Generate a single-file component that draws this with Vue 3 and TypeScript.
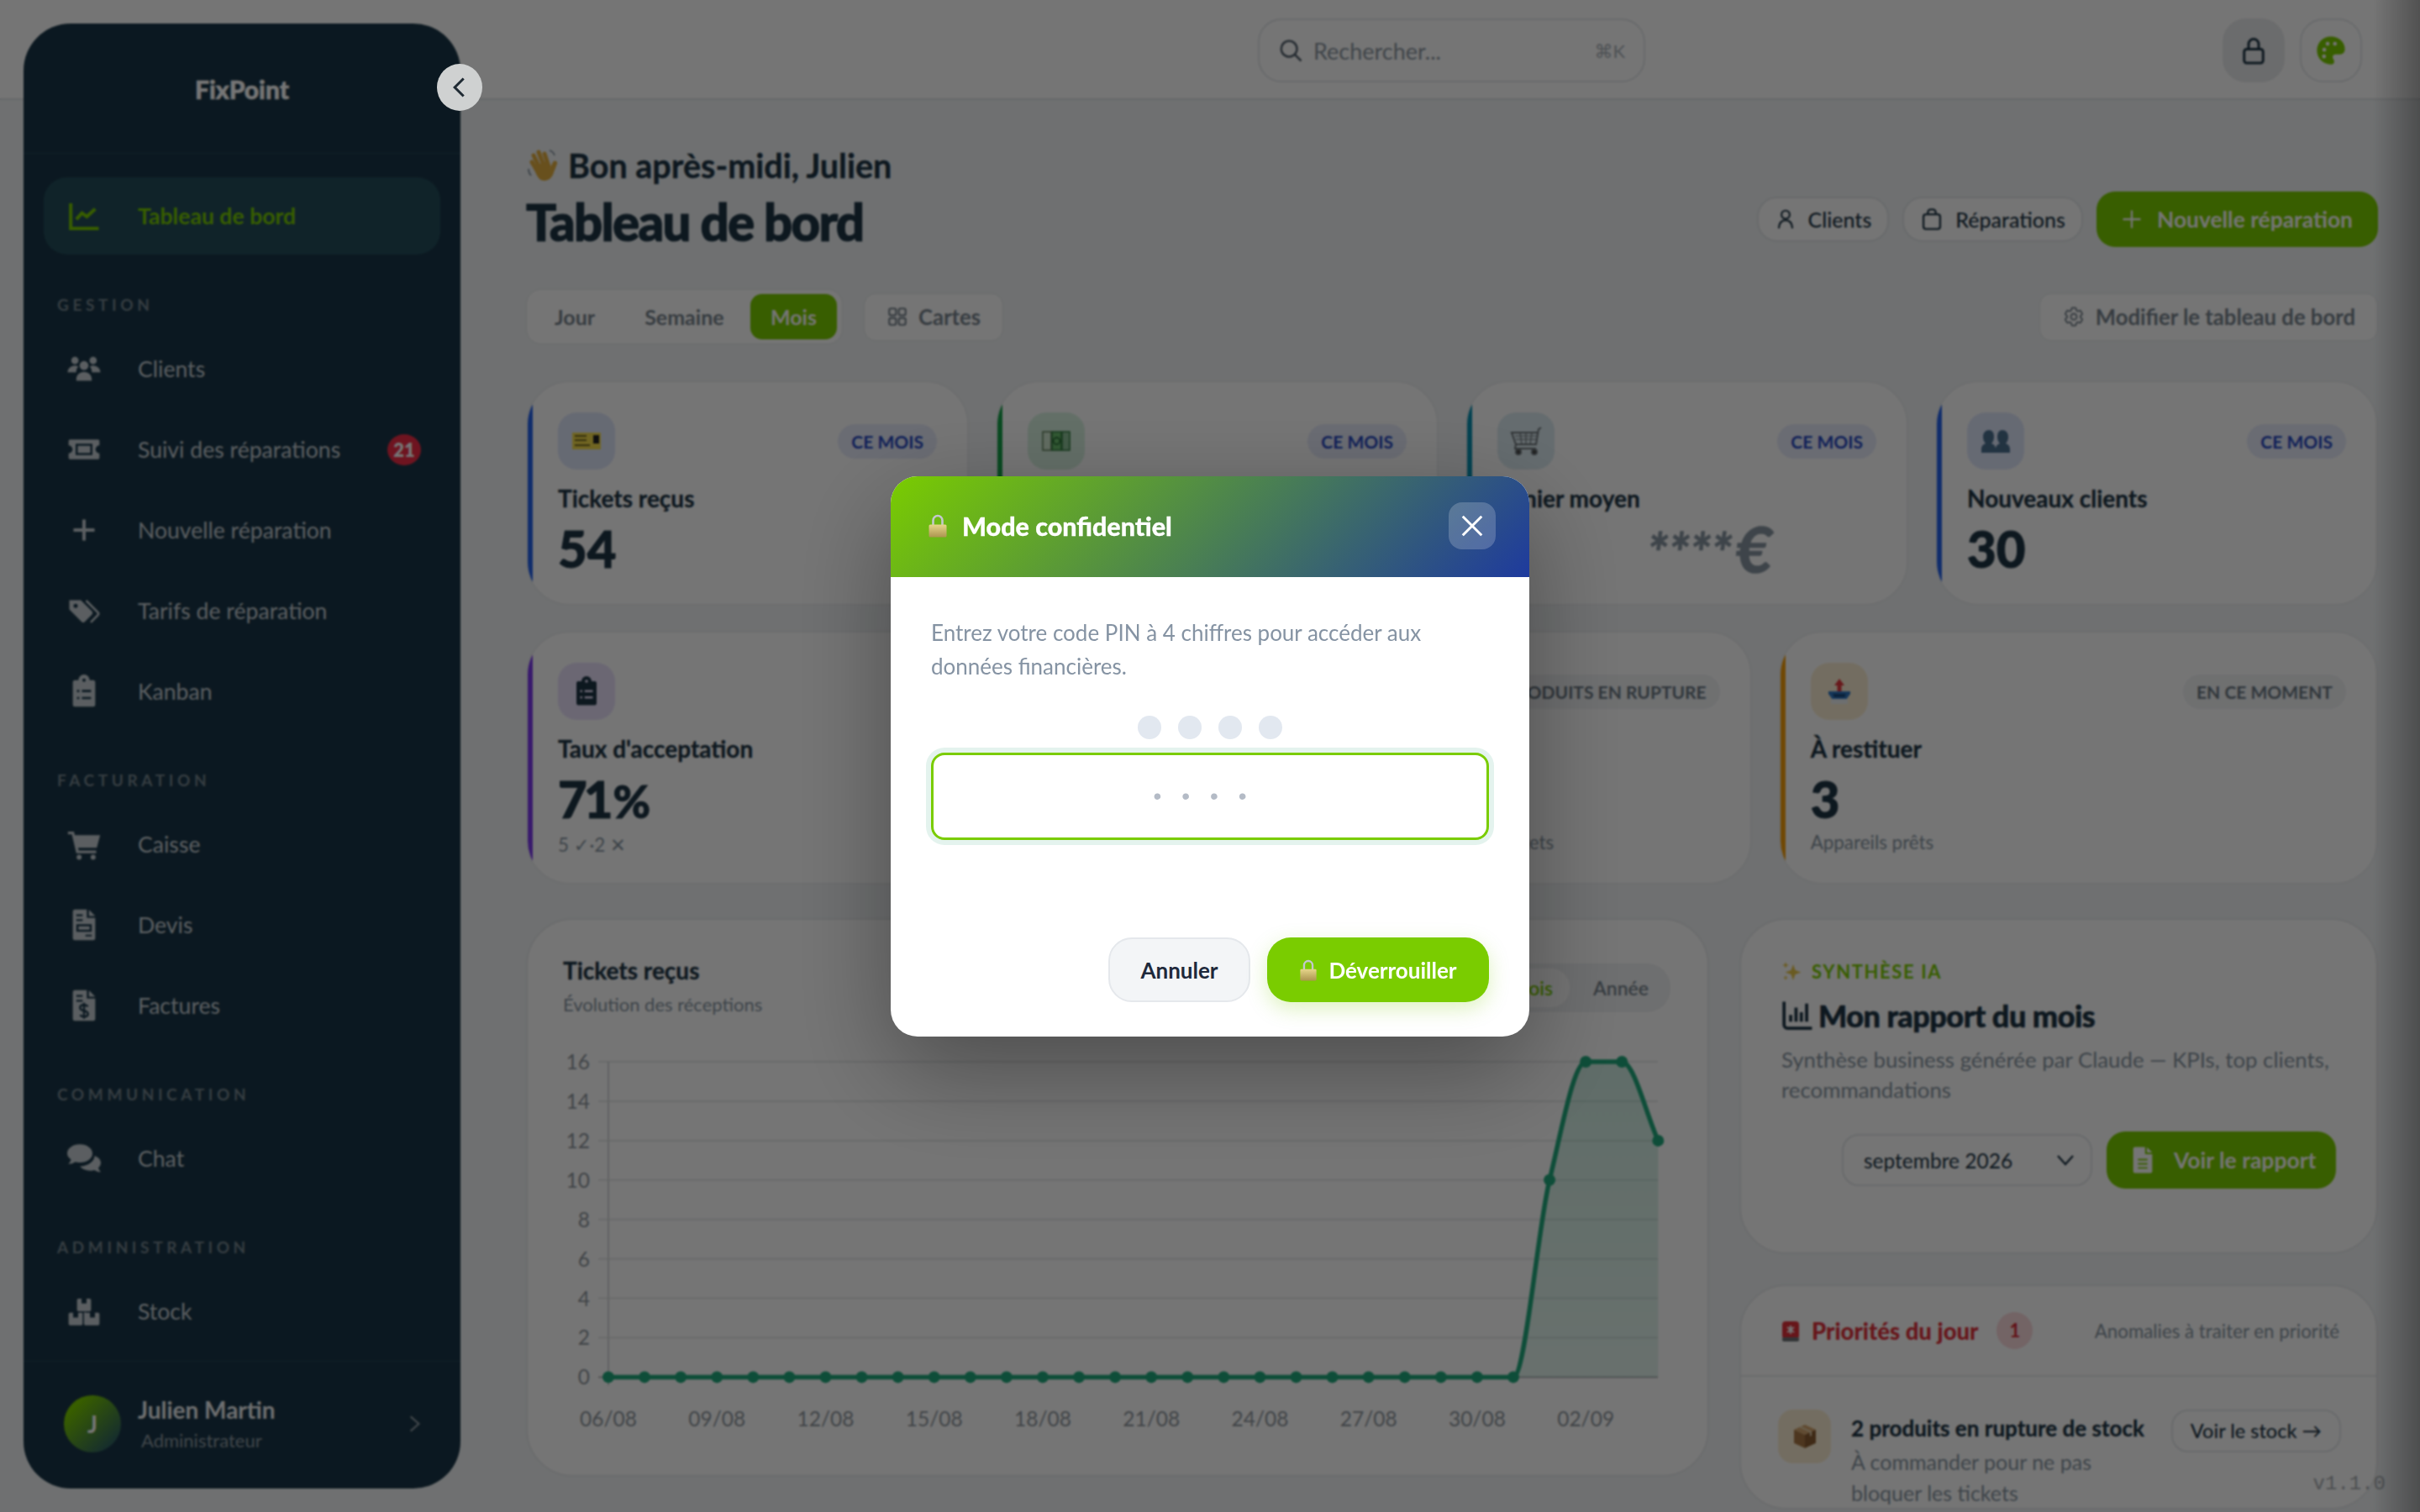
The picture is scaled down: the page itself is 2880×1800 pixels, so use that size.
<script setup lang="ts">
interface NavItem {
  label: string
  icon: string
  badge?: string
  active?: boolean
}

interface NavGroup {
  title?: string
  items: NavItem[]
}

interface Icon {
  f?: string
  s?: string
  w?: number
  cut?: string
}

const icons: Record<string, Icon> = {
  chart: { s: 'M2.500 3v18h20M6.500 14.500l4-4.500 3.500 2.500 6-5.500', w: 2.400 },
  users: {
    f: 'M5.500 3.500a2.600 2.600 0 1 1 0 5.200 2.600 2.600 0 0 1 0-5.200zM18.500 3.500a2.600 2.600 0 1 1 0 5.200 2.600 2.600 0 0 1 0-5.200zM12 6.500a3.200 3.200 0 1 1 0 6.400 3.200 3.200 0 0 1 0-6.400zM.3 14.500c0-2.600 2.200-4.800 5.200-4.800 1 0 1.800.2 2.400.6-1 1-1.500 2.400-1.500 4.200H.3zM23.700 14.500c0-2.600-2.200-4.800-5.200-4.800-1 0-1.800.2-2.400.6 1 1 1.500 2.400 1.500 4.200h6.100zM6.500 19.500c0-3 2.300-5.200 5.500-5.200s5.500 2.200 5.500 5.200v1h-11z',
  },
  ticket: {
    f: 'M2 5h20a1 1 0 0 1 1 1v3.200a2.800 2.800 0 0 0 0 5.600V18a1 1 0 0 1-1 1H2a1 1 0 0 1-1-1v-3.200a2.800 2.800 0 0 0 0-5.600V6a1 1 0 0 1 1-1zM6 8v8h12V8zM7.500 9.500h9v5h-9z',
  },
  plus: { s: 'M12 4.500v15M4.500 12h15', w: 2.400 },
  tags: {
    f: 'M1.500 4.500h8.200l8 8a1.600 1.600 0 0 1 0 2.200l-5.200 5.200a1.600 1.600 0 0 1-2.200 0l-8.800-8.800zM6 7a1.500 1.500 0 1 0 0 3 1.500 1.500 0 0 0 0-3z',
    s: 'M13.500 4.800l8.300 8.300a1.600 1.600 0 0 1 0 2.200l-5 5',
    w: 1.500,
  },
  clipboard: {
    f: 'M5.500 4H8a4 4 0 0 1 8 0h2.500A1.500 1.500 0 0 1 20 5.500v16a1.500 1.500 0 0 1-1.500 1.500h-13A1.500 1.500 0 0 1 4 21.500v-16A1.500 1.500 0 0 1 5.500 4zM12 2.800a1.200 1.200 0 1 0 0 2.400 1.200 1.200 0 0 0 0-2.400zM7 11h1.600v1.600H7zM10.500 11h6.500v1.600h-6.500zM7 16h1.600v1.600H7zM10.500 16h6.500v1.600h-6.500z',
  },
  cart: {
    f: 'M.5 3h4.300l.6 2.500h18.100l-2.400 9H7.800l.4 2h12.500v2H6.500L3.300 5H.5zM8.500 19.500a1.800 1.800 0 1 1 0 3.600 1.800 1.800 0 0 1 0-3.600zM18.500 19.500a1.800 1.800 0 1 1 0 3.600 1.800 1.800 0 0 1 0-3.600z',
  },
  invoice: {
    f: 'M5.500 1H14v6h6v14.500a1.500 1.500 0 0 1-1.500 1.500h-13A1.500 1.500 0 0 1 4 21.500v-19A1.500 1.500 0 0 1 5.500 1zM15.500 1.200l4.500 4.500h-4.500zM6.500 4.500v1.300h4.500V4.500zM6.500 8v1.300h4.500V8zM6.500 11.500v5.500h11v-5.500zM8 13h8v2.500H8zM13 19v1.300h4.500V19z',
  },
  dollar: {
    f: 'M5.500 1H14v6h6v14.500a1.500 1.500 0 0 1-1.500 1.500h-13A1.500 1.500 0 0 1 4 21.500v-19A1.500 1.500 0 0 1 5.500 1zM15.500 1.200l4.500 4.500h-4.500zM6.500 4.500v1.300h4.500V4.500zM6.500 8v1.300h4.500V8z',
    cut: 'M14.800 12.800c-.6-.8-1.600-1.200-2.800-1.200-1.600 0-2.800.8-2.800 2s1.200 1.800 2.800 2.200 2.800 1 2.800 2.200-1.200 2-2.800 2c-1.200 0-2.200-.4-2.800-1.200M12 10v11.500',
  },
  comments: {
    f: 'M9 2c5 0 9 2.900 9 6.500S14 15 9 15c-1.200 0-2.300-.2-3.300-.5C4.400 15.500 2.600 16 .8 16c1-1 1.700-2.200 1.900-3.200C1 11.600 0 10.100 0 8.500 0 4.900 4 2 9 2zM19.500 10.200c2.700.9 4.500 2.800 4.500 5 0 1.400-.7 2.600-1.800 3.600.2 1 .9 2 1.800 3-1.700 0-3.300-.5-4.500-1.400-.9.3-1.900.4-2.900.4-3.200 0-6-1.200-7.400-3.100 5.700-.2 10.300-3.500 10.300-7.500z',
  },
  boxes: {
    f: 'M8 3h2.200v3.500h3.600V3H16a1 1 0 0 1 1 1v7a1 1 0 0 1-1 1H8a1 1 0 0 1-1-1V4a1 1 0 0 1 1-1zM2 13h2.200v3.500h3.600V13h2.700a1 1 0 0 1 .5.100V21a1 1 0 0 1-1 1H2a1 1 0 0 1-1-1v-7a1 1 0 0 1 1-1zM13.500 13h2.700v3.500h3.600V13H22a1 1 0 0 1 1 1v7a1 1 0 0 1-1 1h-9a1 1 0 0 1-1-1v-7.900a1 1 0 0 1 1.500-.1z',
  },
}

const navGroups: NavGroup[] = [
  { items: [{ label: 'Tableau de bord', icon: 'chart', active: true }] },
  {
    title: 'Gestion',
    items: [
      { label: 'Clients', icon: 'users' },
      { label: 'Suivi des réparations', icon: 'ticket', badge: '21' },
      { label: 'Nouvelle réparation', icon: 'plus' },
      { label: 'Tarifs de réparation', icon: 'tags' },
      { label: 'Kanban', icon: 'clipboard' },
    ],
  },
  {
    title: 'Facturation',
    items: [
      { label: 'Caisse', icon: 'cart' },
      { label: 'Devis', icon: 'invoice' },
      { label: 'Factures', icon: 'dollar' },
    ],
  },
  { title: 'Communication', items: [{ label: 'Chat', icon: 'comments' }] },
  { title: 'Administration', items: [{ label: 'Stock', icon: 'boxes' }] },
]

// chart geometry, in svg coordinates
const values = [...Array(26).fill(0), 10, 16, 16, 12] as number[]
const x0 = 96
const stepX = 43.08
const y0 = 399.4
const perUnit = 23.46
const points = values.map((v, i) => ({ x: x0 + i * stepX, y: y0 - v * perUnit }))
const yTicks = [0, 2, 4, 6, 8, 10, 12, 14, 16].map((v) => ({ v, y: y0 - v * perUnit }))
const xTicks = ['06/08', '09/08', '12/08', '15/08', '18/08', '21/08', '24/08', '27/08', '30/08', '02/09'].map(
  (t, i) => ({ t, x: x0 + i * 3 * stepX }),
)

function monotonePath(): string {
  const n = points.length
  const d: number[] = []
  for (let i = 0; i < n - 1; i++) d.push((points[i + 1].y - points[i].y) / stepX)
  const m = points.map((_, i) => {
    if (i === 0) return d[0]
    if (i === n - 1) return d[n - 2]
    if (d[i - 1] * d[i] <= 0) return 0
    return (2 * d[i - 1] * d[i]) / (d[i - 1] + d[i])
  })
  let path = `M${points[0].x} ${points[0].y}`
  for (let i = 0; i < n - 1; i++) {
    const h = stepX / 3
    path += `C${points[i].x + h} ${points[i].y + m[i] * h} ${points[i + 1].x - h} ${points[i + 1].y - m[i + 1] * h} ${points[i + 1].x} ${points[i + 1].y}`
  }
  return path
}

const linePath = monotonePath()
const areaPath = `${linePath}L${points[points.length - 1].x} ${y0}L${x0} ${y0}Z`
</script>

<template>
  <div class="app">
    <svg class="defs" width="0" height="0">
      <defs>
        <linearGradient id="lockBody" x1="0" y1="0" x2="0" y2="1">
          <stop offset="0" stop-color="#e6d68a" />
          <stop offset="1" stop-color="#ac9550" />
        </linearGradient>
        <symbol id="e-lock" viewBox="0 0 24 28">
          <path d="M6.500 14V7.500a5.500 5.500 0 0 1 11 0V14" fill="none" stroke="#c3c8cc" stroke-width="2.600" />
          <rect x="1.500" y="12.500" width="21" height="15" rx="1.500" fill="url(#lockBody)" />
        </symbol>
      </defs>
    </svg>

    <aside class="sidebar">
      <div class="brand">FixPoint</div>
      <nav class="nav">
        <div v-for="(group, gi) in navGroups" :key="gi" class="nav-group">
          <div v-if="group.title" class="nav-title">{{ group.title }}</div>
          <a v-for="item in group.items" :key="item.label" class="nav-item" :class="{ active: item.active }">
            <span class="nav-icon">
              <svg viewBox="0 0 24 24" width="40" height="40">
                <path v-if="icons[item.icon].f" :d="icons[item.icon].f" fill="currentColor" fill-rule="evenodd" />
                <path
                  v-if="icons[item.icon].s"
                  :d="icons[item.icon].s"
                  fill="none"
                  stroke="currentColor"
                  :stroke-width="icons[item.icon].w"
                />
                <path v-if="icons[item.icon].cut" :d="icons[item.icon].cut" fill="none" stroke="#1a3648" stroke-width="1.500" />
              </svg>
            </span>
            <span class="nav-label">{{ item.label }}</span>
            <span v-if="item.badge" class="nav-badge">{{ item.badge }}</span>
          </a>
        </div>
      </nav>
      <div class="profile">
        <div class="avatar">J</div>
        <div class="profile-text">
          <div class="profile-name">Julien Martin</div>
          <div class="profile-role">Administrateur</div>
        </div>
        <svg class="profile-chevron" viewBox="0 0 24 24" width="26" height="26" fill="none" stroke="currentColor" stroke-width="2">
          <path d="M8 4l9 8-9 8" />
        </svg>
      </div>
    </aside>

    <button class="collapse">
      <svg viewBox="0 0 24 24" width="28" height="28" fill="none" stroke="#1f2a33" stroke-width="2.600">
        <path d="M16 3l-9 9 9 9" />
      </svg>
    </button>

    <header class="topbar">
      <div class="search">
        <svg viewBox="0 0 24 24" width="30" height="30" fill="none" stroke="#52606d" stroke-width="2">
          <circle cx="10.500" cy="10.500" r="7.500" />
          <path d="M16 16l6 6" />
        </svg>
        <span class="search-text">Rechercher...</span>
        <span class="search-kbd">⌘K</span>
      </div>
      <div class="top-actions">
        <button class="top-btn locked">
          <svg viewBox="0 0 24 24" width="36" height="36" fill="none" stroke="#1e3545" stroke-width="2">
            <rect x="4.500" y="11" width="15" height="11" rx="2" />
            <path d="M8 11V7a4 4 0 0 1 8 0v4" />
          </svg>
        </button>
        <button class="top-btn">
          <svg viewBox="0 0 24 24" width="38" height="38">
            <path
              fill="#7acc00"
              fill-rule="evenodd"
              d="M12 1.500C6 1.500 1.500 6.200 1.500 12S6 22.500 12 22.500c1.800 0 2.500-1.100 2.500-2.200 0-1.600-1.200-1.900-1.200-3.300 0-1.300 1-2 2.300-2h2.700c2.800 0 4.200-1.700 4.200-4C22.500 5.500 17.800 1.500 12 1.500zM7 10a1.500 1.500 0 1 0 0 3 1.500 1.500 0 0 0 0-3zM9.500 5.500a1.500 1.500 0 1 0 0 3 1.500 1.500 0 0 0 0-3zM15 5.500a1.500 1.500 0 1 0 0 3 1.500 1.500 0 0 0 0-3zM6.800 15a1.500 1.500 0 1 0 0 3 1.500 1.500 0 0 0 0-3z"
            />
          </svg>
        </button>
      </div>
    </header>

    <main class="content">
      <section class="heading">
        <div>
          <div class="greeting">
            <svg viewBox="0 0 40 40" width="40" height="40">
              <g stroke="#e3ae3f" stroke-width="5" stroke-linecap="round" fill="none">
                <path d="M13 26L7 16M16 22L9 8M21 20L15 4M27 21L22 6" />
              </g>
              <path d="M9 22L26 14l2 10 4-8c2-3 6-1 5 2l-5 13c-3 7-11 9-16 5-3-3-5-8-7-14z" fill="#e3ae3f" />
              <path d="M3 24c0 3 1 6 3 8M28 2c3 1 5 3 6 6" fill="none" stroke="#7f8c99" stroke-width="1.600" />
            </svg>
            <span>Bon après-midi, Julien</span>
          </div>
          <h1 class="page-title">Tableau de bord</h1>
        </div>
        <div class="head-actions">
          <a class="ghost-btn">
            <svg viewBox="0 0 24 24" width="26" height="26" fill="none" stroke="currentColor" stroke-width="2">
              <circle cx="12" cy="7" r="4.500" />
              <path d="M4.500 22c.5-6 3.500-9 7.500-9s7 3 7.500 9" />
            </svg>
            Clients
          </a>
          <a class="ghost-btn">
            <svg viewBox="0 0 24 24" width="28" height="28" fill="none" stroke="currentColor" stroke-width="2">
              <rect x="3.500" y="7" width="17" height="15" rx="2.500" />
              <path d="M8 7V5a3 3 0 0 1 3-3h2a3 3 0 0 1 3 3v2" />
            </svg>
            Réparations
          </a>
          <a class="primary-btn">
            <svg viewBox="0 0 24 24" width="28" height="28" fill="none" stroke="currentColor" stroke-width="2">
              <path d="M12 3v18M3 12h18" />
            </svg>
            Nouvelle réparation
          </a>
        </div>
      </section>

      <section class="toolbar">
        <div class="seg">
          <span class="seg-item">Jour</span>
          <span class="seg-item second">Semaine</span>
          <span class="seg-item on">Mois</span>
        </div>
        <a class="tool-btn cards-btn">
          <svg viewBox="0 0 24 24" width="26" height="26" fill="none" stroke="currentColor" stroke-width="2">
            <rect x="3" y="3" width="7.500" height="7.500" rx="2" />
            <rect x="13.500" y="3" width="7.500" height="7.500" rx="2" />
            <rect x="3" y="13.500" width="7.500" height="7.500" rx="2" />
            <rect x="13.500" y="13.500" width="7.500" height="7.500" rx="2" />
          </svg>
          Cartes
        </a>
        <a class="tool-btn edit-btn">
          <svg viewBox="0 0 24 24" width="28" height="28" fill="none" stroke="currentColor" stroke-width="1.600">
            <path d="M9.594 3.940c.09-.542.56-.94 1.110-.94h2.593c.55 0 1.020.398 1.110.94l.213 1.281c.063.374.313.686.645.870.074.04.147.083.22.127.325.196.72.257 1.075.124l1.217-.456a1.125 1.125 0 0 1 1.370.49l1.296 2.247a1.125 1.125 0 0 1-.26 1.431l-1.003.827c-.293.241-.438.613-.43.992a7.723 7.723 0 0 1 0 .255c-.008.378.137.75.43.991l1.004.827c.424.35.534.955.26 1.430l-1.298 2.247a1.125 1.125 0 0 1-1.369.491l-1.217-.456c-.355-.133-.75-.072-1.076.124a6.470 6.470 0 0 1-.22.128c-.331.183-.581.495-.644.869l-.213 1.281c-.09.543-.56.94-1.110.94h-2.594c-.55 0-1.019-.398-1.110-.94l-.213-1.281c-.062-.374-.312-.686-.644-.87a6.520 6.520 0 0 1-.22-.127c-.325-.196-.72-.257-1.076-.124l-1.217.456a1.125 1.125 0 0 1-1.369-.49l-1.297-2.247a1.125 1.125 0 0 1 .26-1.431l1.004-.827c.292-.24.437-.613.43-.991a6.932 6.932 0 0 1 0-.255c.007-.38-.138-.751-.43-.992l-1.004-.827a1.125 1.125 0 0 1-.26-1.430l1.297-2.247a1.125 1.125 0 0 1 1.370-.491l1.216.456c.356.133.751.072 1.076-.124.072-.044.146-.086.22-.128.332-.183.582-.495.644-.869l.214-1.280Z" />
            <circle cx="12" cy="12" r="3" />
          </svg>
          Modifier le tableau de bord
        </a>
      </section>

      <section class="kpi-row four">
        <article class="kpi blue">
          <div class="kpi-top">
            <span class="kpi-icon">
              <svg viewBox="0 0 34 20" width="34" height="20">
                <rect width="34" height="20" fill="#f4dc4a" />
                <rect x="3" y="3" width="14" height="2" fill="#6f6420" />
                <rect x="3" y="8" width="14" height="2" fill="#6f6420" />
                <rect x="3" y="14" width="18" height="2" fill="#6f6420" />
                <rect x="25" y="3" width="7" height="10" fill="#222" />
              </svg>
            </span>
            <span class="kpi-tag">CE MOIS</span>
          </div>
          <div class="kpi-title">Tickets reçus</div>
          <div class="kpi-value">54</div>
        </article>
        <article class="kpi green">
          <div class="kpi-top">
            <span class="kpi-icon">
              <svg viewBox="0 0 34 24" width="34" height="24">
                <rect x="1" y="1" width="10" height="22" fill="#d5ecd4" stroke="#5d7d58" stroke-width="1.500" />
                <rect x="12" y="1" width="11" height="22" fill="#6cc070" stroke="#2e7a3d" stroke-width="1.500" />
                <circle cx="17.500" cy="12" r="4" fill="none" stroke="#1d5c2b" stroke-width="1.500" />
                <rect x="24" y="1" width="9" height="22" fill="#8fc49a" stroke="#2e7a3d" stroke-width="1.500" />
              </svg>
            </span>
            <span class="kpi-tag">CE MOIS</span>
          </div>
          <div class="kpi-title">Chiffre d'affaires</div>
          <div class="kpi-value masked">****<span class="euro">€</span></div>
        </article>
        <article class="kpi teal">
          <div class="kpi-top">
            <span class="kpi-icon">
              <svg viewBox="0 0 40 36" width="40" height="36" fill="none" stroke="#6b7378" stroke-width="2">
                <path d="M38 2l-3 2-3 18H8L3 8h31" />
                <path d="M7 12h26M8 16h24M13 8l2 14M20 8v14M27 8l-2 14" stroke-width="1.200" />
                <circle cx="11" cy="31" r="3" fill="#444" />
                <circle cx="30" cy="31" r="3" fill="#444" />
                <path d="M8 22l-1 5h25" />
              </svg>
            </span>
            <span class="kpi-tag">CE MOIS</span>
          </div>
          <div class="kpi-title">Panier moyen</div>
          <div class="kpi-value masked">****<span class="euro">€</span></div>
        </article>
        <article class="kpi blue">
          <div class="kpi-top">
            <span class="kpi-icon">
              <svg viewBox="0 0 34 30" width="34" height="30" fill="#4a6f8f">
                <path d="M9 2c4 0 6 3 6 8 0 3-1 6-3 8 3 1 5 3 5 7v4H0v-4c0-4 2-6 5-7-2-2-3-5-3-8 0-5 3-8 7-8z" />
                <path d="M25 2c4 0 7 3 7 8 0 3-1 6-3 8 3 1 5 3 5 7v4H17v-4c0-4 2-6 5-7-2-2-3-5-3-8 0-5 2-8 6-8z" />
              </svg>
            </span>
            <span class="kpi-tag">CE MOIS</span>
          </div>
          <div class="kpi-title">Nouveaux clients</div>
          <div class="kpi-value">30</div>
        </article>
      </section>

      <section class="kpi-row three">
        <article class="kpi purple">
          <div class="kpi-top">
            <span class="kpi-icon">
              <svg viewBox="0 0 24 24" width="36" height="36">
                <path :d="icons.clipboard.f" fill="#1e3545" fill-rule="evenodd" />
              </svg>
            </span>
          </div>
          <div class="kpi-title">Taux d'acceptation</div>
          <div class="kpi-value tight">71<span class="pct">%</span></div>
          <div class="kpi-sub">5 ✓·2 ✕</div>
        </article>
        <article class="kpi red">
          <div class="kpi-top">
            <span class="kpi-icon"></span>
            <span class="kpi-tag grey">PRODUITS EN RUPTURE</span>
          </div>
          <div class="kpi-title">Stock critique</div>
          <div class="kpi-value">2</div>
          <div class="kpi-sub">À commander pour ne pas bloquer les tickets</div>
        </article>
        <article class="kpi amber">
          <div class="kpi-top">
            <span class="kpi-icon">
              <svg viewBox="0 0 32 32" width="32" height="32">
                <path d="M3 16h26v3l-5 7H8l-5-7z" fill="#2f78c4" />
                <path d="M8 19h16l-2 4H10z" fill="#17497f" />
                <path d="M6 25h20v6H6z" fill="#eef1f4" />
                <path d="M16 1l6 8h-3.500v7h-5V9H10z" fill="#e3363c" />
              </svg>
            </span>
            <span class="kpi-tag grey">EN CE MOMENT</span>
          </div>
          <div class="kpi-title">À restituer</div>
          <div class="kpi-value">3</div>
          <div class="kpi-sub">Appareils prêts</div>
        </article>
      </section>

      <section class="lower">
        <article class="panel chart-panel">
          <div class="chart-head">
            <div>
              <div class="chart-title">Tickets reçus</div>
              <div class="chart-sub">Évolution des réceptions</div>
            </div>
            <div class="range">
              <span class="range-item on">Mois</span>
              <span class="range-item">Année</span>
            </div>
          </div>
          <svg class="chart" width="1404" height="480">
            <defs>
              <linearGradient id="areaFill" x1="0" y1="0" x2="0" y2="1">
                <stop offset="0" stop-color="#1aa876" stop-opacity=".2" />
                <stop offset="1" stop-color="#1aa876" stop-opacity=".12" />
              </linearGradient>
            </defs>
            <g v-for="tick in yTicks" :key="tick.v">
              <line :x1="x0 - 12" :x2="1345" :y1="tick.y" :y2="tick.y" :stroke="tick.v === 0 ? '#b5b8bb' : '#e6e7e8'" stroke-width="2" />
              <text :x="x0 - 22" :y="tick.y + 9" text-anchor="end" class="tick">{{ tick.v }}</text>
            </g>
            <line :x1="x0" :x2="x0" :y1="y0 - 16 * perUnit" :y2="y0 + 10" stroke="#d5d7d9" stroke-width="2" />
            <text v-for="tick in xTicks" :key="tick.t" :x="tick.x" y="458" text-anchor="middle" class="tick">{{ tick.t }}</text>
            <path :d="areaPath" fill="url(#areaFill)" />
            <path :d="linePath" fill="none" stroke="#20a97c" stroke-width="5.500" />
            <circle v-for="(p, i) in points" :key="i" :cx="p.x" :cy="p.y" r="7" fill="#20a97c" />
          </svg>
        </article>

        <div class="side-col">
          <article class="panel ai-panel">
            <div class="ai-eyebrow">
              <svg viewBox="0 0 24 24" width="24" height="24" fill="#e8c64a">
                <path d="M14 4l2.500 7 7 2.500-7 2.500-2.500 7-2.500-7-7-2.500 7-2.500z" />
                <path d="M5 1l1 3 3 1-3 1-1 3-1-3-3-1 3-1zM5 17l.8 2.200L8 20l-2.200.8L5 23l-.8-2.200L2 20l2.200-.8z" />
              </svg>
              SYNTHÈSE IA
            </div>
            <h2 class="ai-title">
              <svg viewBox="0 0 24 24" width="38" height="38" fill="none" stroke="#1e3545" stroke-width="2.400">
                <path d="M2 1.500V19a2.500 2.500 0 0 0 2.500 2.500H23" />
                <path d="M7 16.500v-5M11 16.500V6M15 16.500v-7M19 16.500V3" />
              </svg>
              Mon rapport du mois
            </h2>
            <p class="ai-desc">Synthèse business générée par Claude — KPIs, top clients, recommandations</p>
            <div class="ai-actions">
              <div class="month-select">
                septembre 2026
                <svg viewBox="0 0 24 24" width="24" height="24" fill="none" stroke="currentColor" stroke-width="2.400">
                  <path d="M3 7l9 10 9-10" />
                </svg>
              </div>
              <a class="report-btn">
                <svg viewBox="0 0 24 24" width="34" height="34">
                  <path
                    fill="#fff"
                    fill-rule="evenodd"
                    d="M5.500 1H14v6h6v14.500a1.500 1.500 0 0 1-1.500 1.500h-13A1.500 1.500 0 0 1 4 21.500v-19A1.500 1.500 0 0 1 5.500 1zM15.500 1.200l4.500 4.500h-4.500zM8 11v1.300h8V11zM8 14.500v1.300h8v-1.300zM8 18v1.300h8V18z"
                  />
                </svg>
                Voir le rapport
              </a>
            </div>
          </article>

          <article class="panel prio-panel">
            <div class="prio-head">
              <svg viewBox="0 0 22 28" width="22" height="28">
                <rect x="1" y="3" width="20" height="21" rx="4" fill="#e0303a" />
                <rect x="1" y="22" width="20" height="5" rx="2" fill="#6d7276" />
                <path d="M11 8v10M7 10l8 6M15 10l-8 6" stroke="#fff" stroke-width="2" />
              </svg>
              <span class="prio-title">Priorités du jour</span>
              <span class="prio-count">1</span>
              <span class="prio-note">Anomalies à traiter en priorité</span>
            </div>
            <div class="prio-row">
              <span class="prio-icon">
                <svg viewBox="0 0 28 30" width="28" height="30">
                  <path d="M14 1l13 6-13 6L1 7z" fill="#d4a56e" />
                  <path d="M1 7l13 6v16L1 23z" fill="#a87744" />
                  <path d="M27 7l-13 6v16l13-6z" fill="#8a5c30" />
                  <path d="M7 4l13 6v5l2-1v-5L9 3z" fill="#e6d3b0" />
                </svg>
              </span>
              <div class="prio-text">
                <div class="prio-name">2 produits en rupture de stock</div>
                <div class="prio-desc">À commander pour ne pas bloquer les tickets</div>
              </div>
              <a class="prio-btn">Voir le stock →</a>
            </div>
          </article>
        </div>
      </section>
    </main>

    <div class="version">v1.1.0</div>
    <div class="edge-shade"></div>

    <div class="overlay">
      <div class="modal">
        <div class="modal-head">
          <svg class="emoji-lock" width="24" height="28"><use href="#e-lock" /></svg>
          <span class="modal-title">Mode confidentiel</span>
          <button class="modal-close">
            <svg viewBox="0 0 24 24" width="30" height="30" fill="none" stroke="#fff" stroke-width="2.400">
              <path d="M3 3l18 18M21 3L3 21" />
            </svg>
          </button>
        </div>
        <div class="modal-body">
          <p class="modal-text">Entrez votre code PIN à 4 chiffres pour accéder aux données financières.</p>
          <div class="pin-dots">
            <span v-for="n in 4" :key="n" class="pin-dot"></span>
          </div>
          <input class="pin-input" type="password" placeholder="••••" />
          <div class="modal-actions">
            <button class="btn-cancel">Annuler</button>
            <button class="btn-unlock">
              <svg width="22" height="26"><use href="#e-lock" /></svg>
              Déverrouiller
            </button>
          </div>
        </div>
      </div>
    </div>
  </div>
</template>

<style>
html,
body {
  margin: 0;
  background: #f1f4f6;
}
</style>

<style scoped>
* {
  box-sizing: border-box;
}

.app {
  position: relative;
  width: 2880px;
  height: 1800px;
  overflow: hidden;
  background: #f1f4f6;
  color: #1e3545;
  font-family: Lato, 'DejaVu Sans', sans-serif;
}

.defs {
  position: absolute;
}

/* sidebar */
.sidebar {
  position: absolute;
  left: 28px;
  top: 28px;
  bottom: 28px;
  width: 520px;
  display: flex;
  flex-direction: column;
  background: #1a3648;
  border-radius: 56px;
  color: #c6ced4;
}

.brand {
  height: 155px;
  padding-top: 50px;
  text-align: center;
  font-size: 30px;
  line-height: 56px;
  font-weight: 900;
  color: #fff;
  -webkit-text-stroke: 0.6px #fff;
  border-bottom: 1px solid #234558;
}

.nav {
  flex: 1;
  padding: 28px 24px 0;
}

.nav-title {
  height: 24px;
  margin: 48px 0 18px 16px;
  font-size: 19px;
  line-height: 24px;
  font-weight: 700;
  letter-spacing: 4.600px;
  text-transform: uppercase;
  color: #75858f;
}

.nav-item {
  display: flex;
  align-items: center;
  height: 92px;
  margin-bottom: 4px;
  padding-left: 28px;
  border-radius: 28px;
  font-size: 26.600px;
}

.nav-item:last-child {
  margin-bottom: 0;
}

.nav-item.active {
  background: #234d5b;
  color: #7acc00;
  font-weight: 700;
}

.nav-icon {
  display: flex;
  justify-content: center;
  width: 40px;
  margin-right: 44px;
}

.nav-label {
  flex: 1;
}

.nav-badge {
  width: 40px;
  height: 37px;
  margin-right: 23px;
  border-radius: 50%;
  background: #ef2d46;
  color: #fff;
  text-align: center;
  font-size: 22px;
  line-height: 37px;
  font-weight: 800;
}

.profile {
  display: flex;
  align-items: center;
  height: 152px;
  padding: 0 42px 4px 48px;
  border-top: 1px solid #234558;
}

.avatar {
  flex: none;
  width: 68px;
  height: 68px;
  margin-right: 20px;
  border-radius: 50%;
  background: linear-gradient(135deg, #7acc00 20%, #1e4a7a 100%);
  color: #fff;
  text-align: center;
  font-size: 28px;
  line-height: 68px;
  font-weight: 700;
}

.profile-text {
  flex: 1;
}

.profile-name {
  font-size: 28px;
  line-height: 36px;
  font-weight: 700;
  color: #eef1f3;
}

.profile-role {
  margin-top: 4px;
  margin-left: 4px;
  font-size: 22px;
  line-height: 30px;
  color: #8d9aa3;
}

.profile-chevron {
  color: #8d9aa3;
}

.collapse {
  position: absolute;
  z-index: 60;
  left: 520px;
  top: 76px;
  display: flex;
  align-items: center;
  justify-content: center;
  width: 54px;
  height: 56px;
  padding: 0;
  border: 0;
  border-radius: 50%;
  background: #cfd1d1;
}

/* top bar */
.topbar {
  display: flex;
  align-items: flex-start;
  height: 119px;
  padding: 22px 69px 0 0;
  background: #fff;
  border-bottom: 2px solid #dfe3e6;
}

.search {
  display: flex;
  align-items: center;
  width: 461px;
  height: 76px;
  margin-left: 1497px;
  padding: 0 22px;
  border: 2px solid #e4e7ea;
  border-radius: 28px;
  font-size: 27px;
  color: #8c97a1;
}

.search-text {
  flex: 1;
  margin-left: 12px;
}

.search-kbd {
  font-size: 22px;
  color: #a9b1b8;
}

.top-actions {
  display: flex;
  gap: 18px;
  margin-left: auto;
}

.top-btn {
  display: flex;
  align-items: center;
  justify-content: center;
  width: 74px;
  height: 76px;
  padding: 0;
  background: #fff;
  border: 2px solid #e4e7ea;
  border-radius: 28px;
}

.top-btn.locked {
  background: #e9ebed;
  border-color: #e9ebed;
}

/* content */
.content {
  padding: 53px 50px 0 626px;
}

.heading {
  display: flex;
  justify-content: space-between;
  height: 172px;
}

.greeting {
  display: flex;
  align-items: center;
  gap: 10px;
  height: 50px;
  font-size: 39.500px;
  line-height: 50px;
  font-weight: 700;
  -webkit-text-stroke: 0.4px #1e3545;
}

.page-title {
  margin: 6px 0 0;
  font-size: 60px;
  line-height: 72px;
  font-weight: 900;
  letter-spacing: -1.700px;
  -webkit-text-stroke: 1.200px #1e3545;
}

.head-actions {
  display: flex;
  align-items: center;
  gap: 16px;
  margin-top: 56px;
  height: 66px;
}

.ghost-btn {
  display: flex;
  align-items: center;
  gap: 14px;
  height: 54px;
  padding: 0 19px;
  background: #fff;
  border: 2px solid #e4e7ea;
  border-radius: 24px;
  font-size: 25px;
  font-weight: 500;
}

.primary-btn {
  display: flex;
  align-items: center;
  gap: 16px;
  height: 66px;
  padding: 0 30px 0 28px;
  border-radius: 22px;
  background: #7acc00;
  color: #fff;
  font-size: 26.400px;
  font-weight: 700;
}

.toolbar {
  display: flex;
  align-items: center;
  height: 66px;
  margin-bottom: 43px;
}

.seg {
  display: flex;
  align-items: center;
  width: 377px;
  height: 66px;
  padding: 0 6px 0 33px;
  background: #fff;
  border: 1px solid #e4e7ea;
  border-radius: 18px;
  font-size: 25px;
  font-weight: 700;
  color: #78848e;
}

.seg-item {
  line-height: 54px;
  white-space: nowrap;
}

.seg-item.second {
  margin-left: 59px;
}

.seg-item.on {
  flex: none;
  margin-left: auto;
  width: 103px;
  text-align: center;
  border-radius: 14px;
  background: #7acc00;
  color: #fff;
}

.tool-btn {
  display: flex;
  align-items: center;
  gap: 12px;
  height: 57px;
  padding: 0 26px;
  background: #fff;
  border: 1px solid #e4e7ea;
  border-radius: 14px;
  font-size: 25.700px;
  font-weight: 700;
  color: #78848e;
}

.cards-btn {
  margin-left: 25px;
}

.edit-btn {
  margin-left: auto;
}

.kpi-row {
  display: grid;
  gap: 32px;
}

.kpi-row.four {
  grid-template-columns: repeat(4, 1fr);
  height: 268px;
  margin-bottom: 30px;
}

.kpi-row.three {
  grid-template-columns: repeat(3, 1fr);
  height: 302px;
  margin-bottom: 40px;
}

.kpi {
  position: relative;
  overflow: hidden;
  padding: 36px 36px 0 36px;
  background: #fff;
  border: 2px solid #eceef0;
  border-radius: 52px;
}

.kpi::before {
  content: '';
  position: absolute;
  left: -2px;
  top: -2px;
  bottom: -2px;
  width: 8px;
  background: #2563eb;
}

.kpi.green::before {
  background: #16a34a;
}
.kpi.teal::before {
  background: #0891b2;
}
.kpi.purple::before {
  background: #7c3aed;
}
.kpi.red::before {
  background: #dc2626;
}
.kpi.amber::before {
  background: #f59e0b;
}

.kpi-top {
  display: flex;
  align-items: center;
  justify-content: space-between;
  height: 68px;
}

.kpi-icon {
  display: flex;
  align-items: center;
  justify-content: center;
  width: 68px;
  height: 68px;
  border-radius: 22px;
  background: #dfe7fb;
}

.green .kpi-icon {
  background: #d8f2e1;
}
.teal .kpi-icon {
  background: #dcebf1;
}
.purple .kpi-icon {
  background: #e9e1fb;
}
.amber .kpi-icon {
  background: #fbeed3;
}

.kpi-tag {
  height: 41px;
  padding: 0 16px;
  border-radius: 21px;
  background: #e7ebfa;
  color: #2547c0;
  font-size: 21px;
  line-height: 41px;
  font-weight: 700;
}

.kpi-tag.grey {
  background: #f1f3f5;
  color: #6b7883;
}

.kpi-title {
  margin-top: 16px;
  font-size: 28px;
  line-height: 36px;
  font-weight: 700;
  -webkit-text-stroke: 0.3px #1e3545;
}

.kpi-value {
  margin-top: 6px;
  font-size: 60px;
  line-height: 72px;
  font-weight: 900;
  -webkit-text-stroke: 1px #1e3545;
}

.kpi-value.tight {
  letter-spacing: -4px;
}

.pct {
  margin-left: 4px;
  font-size: 54px;
}

.kpi-value.masked {
  padding-left: 178px;
  color: #8795a1;
  font-style: italic;
  font-weight: 900;
  font-size: 64px;
  -webkit-text-stroke: 0.6px #8795a1;
}

.euro {
  margin-left: 4px;
  font-size: 76px;
}

.kpi-sub {
  font-size: 22.400px;
  line-height: 32px;
  color: #8795a1;
}

.lower {
  display: grid;
  grid-template-columns: 1408px 760px;
  gap: 36px;
}

.panel {
  background: #fff;
  border: 2px solid #e8eaec;
  border-radius: 56px;
}

.chart-panel {
  height: 665px;
}

.chart-head {
  display: flex;
  justify-content: space-between;
  height: 145px;
  padding: 42px 44px 0 42px;
}

.chart-title {
  font-size: 28px;
  line-height: 36px;
  font-weight: 700;
  -webkit-text-stroke: 0.3px #1e3545;
}

.chart-sub {
  margin-top: 8px;
  font-size: 22px;
  line-height: 30px;
  color: #8795a1;
}

.range {
  display: flex;
  align-items: center;
  gap: 8px;
  height: 58px;
  margin-top: 10px;
  padding: 0 6px;
  border-radius: 28px;
  background: #eff1f3;
  font-size: 23px;
  font-weight: 600;
  color: #78848e;
}

.range-item {
  padding: 0 20px;
  line-height: 46px;
}

.range-item.on {
  background: #fff;
  border-radius: 22px;
  color: #7acc00;
}

.chart {
  display: block;
}

.tick {
  font-family: Lato, sans-serif;
  font-size: 24.500px;
  fill: #8e969d;
}

.side-col {
  display: flex;
  flex-direction: column;
  gap: 36px;
}

.ai-panel {
  height: 400px;
  padding: 46px 48px 0;
}

.ai-eyebrow {
  display: flex;
  align-items: center;
  gap: 12px;
  height: 30px;
  font-size: 22px;
  font-weight: 700;
  letter-spacing: 1.600px;
  color: #7acc00;
}

.ai-title {
  display: flex;
  align-items: center;
  gap: 6px;
  margin: 12px 0 0;
  font-size: 36px;
  line-height: 52px;
  font-weight: 900;
  letter-spacing: -0.5px;
  -webkit-text-stroke: 0.6px #1e3545;
}

.ai-desc {
  margin: 8px 0 0;
  font-size: 25.800px;
  line-height: 36px;
  color: #8795a1;
}

.ai-actions {
  display: flex;
  align-items: center;
  justify-content: flex-end;
  gap: 17px;
  margin-top: 32px;
}

.month-select {
  display: flex;
  align-items: center;
  justify-content: space-between;
  width: 298px;
  height: 62px;
  padding: 0 18px 0 24px;
  border: 2px solid #e4e7ea;
  border-radius: 20px;
  font-size: 24.500px;
}

.report-btn {
  display: flex;
  align-items: center;
  gap: 20px;
  width: 273px;
  height: 68px;
  padding-left: 26px;
  border-radius: 22px;
  background: #7acc00;
  color: #fff;
  font-size: 26.500px;
  font-weight: 700;
}

.prio-head {
  display: flex;
  align-items: center;
  height: 108px;
  padding: 0 44px 0 48px;
  border-bottom: 2px solid #e8eaec;
}

.prio-title {
  margin-left: 14px;
  font-size: 27.500px;
  font-weight: 900;
  color: #e0303a;
}

.prio-count {
  width: 43px;
  height: 44px;
  margin-left: 22px;
  border-radius: 50%;
  background: #fad9dc;
  color: #d52633;
  text-align: center;
  font-size: 22px;
  line-height: 44px;
  font-weight: 700;
}

.prio-note {
  margin-left: auto;
  font-size: 22.300px;
  color: #8795a1;
}

.prio-row {
  display: flex;
  align-items: flex-start;
  padding: 39px 42px 0 44px;
}

.prio-icon {
  flex: none;
  display: flex;
  align-items: center;
  justify-content: center;
  width: 63px;
  height: 64px;
  border-radius: 18px;
  background: #fbeed3;
}

.prio-text {
  flex: 1;
  margin-left: 24px;
  margin-top: 4px;
}

.prio-name {
  font-size: 26px;
  line-height: 36px;
  font-weight: 700;
  white-space: nowrap;
  -webkit-text-stroke: 0.3px #1e3545;
}

.prio-desc {
  width: 300px;
  margin-top: 4px;
  font-size: 25px;
  line-height: 36.500px;
  color: #8795a1;
}

.prio-btn {
  flex: none;
  height: 51px;
  padding: 0 21px;
  border: 2px solid #e4e7ea;
  border-radius: 20px;
  font-size: 23.500px;
  line-height: 47px;
  font-weight: 500;
}

.version {
  position: absolute;
  right: 41px;
  bottom: 20px;
  font-family: 'Liberation Mono', monospace;
  font-size: 24px;
  color: #a8adb1;
}

.edge-shade {
  position: absolute;
  top: 0;
  bottom: 0;
  right: 0;
  width: 56px;
  background: linear-gradient(to left, rgba(0, 0, 0, 0.3), rgba(0, 0, 0, 0));
}

/* modal */
.overlay {
  position: absolute;
  inset: 0;
  z-index: 50;
  display: flex;
  align-items: center;
  justify-content: center;
  background: rgba(0, 0, 0, 0.54);
  backdrop-filter: blur(1px);
}

.modal {
  width: 760px;
  height: 667px;
  background: #fff;
  border-radius: 32px;
  overflow: hidden;
  box-shadow: 0 40px 120px rgba(0, 0, 0, 0.35);
}

.modal-head {
  display: flex;
  align-items: center;
  height: 120px;
  padding: 0 40px 2px 44px;
  background: linear-gradient(135deg, #7acc00 0%, #1e3a9e 100%);
  color: #fff;
}

.modal-title {
  flex: 1;
  margin-left: 17px;
  font-size: 30.500px;
  font-weight: 900;
  -webkit-text-stroke: 0.3px #fff;
}

.modal-close {
  display: flex;
  align-items: center;
  justify-content: center;
  width: 56px;
  height: 56px;
  padding: 0;
  border: 0;
  border-radius: 16px;
  background: rgba(255, 255, 255, 0.2);
}

.modal-body {
  padding: 46px 48px 0;
}

.modal-text {
  margin: 0;
  font-size: 26px;
  line-height: 40px;
  color: #8593a3;
}

.pin-dots {
  display: flex;
  justify-content: center;
  gap: 20px;
  margin-top: 39px;
}

.pin-dot {
  width: 28px;
  height: 28px;
  border-radius: 50%;
  background: #e2e8f0;
}

.pin-input {
  display: block;
  width: 664px;
  height: 104px;
  margin-top: 16px;
  outline: 0;
  border: 3px solid #7acc00;
  border-radius: 16px;
  box-shadow: 0 0 0 6px #e4f3ee;
  background: #fff;
  text-align: center;
  font-family: 'Liberation Sans', sans-serif;
  font-size: 28px;
  letter-spacing: 24px;
}

.pin-input::placeholder {
  color: #b4bbc6;
}

.modal-actions {
  display: flex;
  justify-content: flex-end;
  gap: 20px;
  margin-top: 116px;
}

.btn-cancel {
  width: 169px;
  height: 77px;
  padding-top: 3px;
  border: 2px solid #e5e8ec;
  border-radius: 28px;
  background: #f3f5f7;
  color: #1e293b;
  font-family: inherit;
  font-size: 26px;
  font-weight: 700;
}

.btn-unlock {
  display: flex;
  align-items: center;
  justify-content: center;
  gap: 13px;
  width: 264px;
  height: 77px;
  padding-top: 3px;
  border: 0;
  border-radius: 28px;
  background: #7acc00;
  color: #fff;
  font-family: inherit;
  font-size: 26px;
  font-weight: 700;
  box-shadow: 0 8px 24px rgba(122, 204, 0, 0.25);
}
</style>
